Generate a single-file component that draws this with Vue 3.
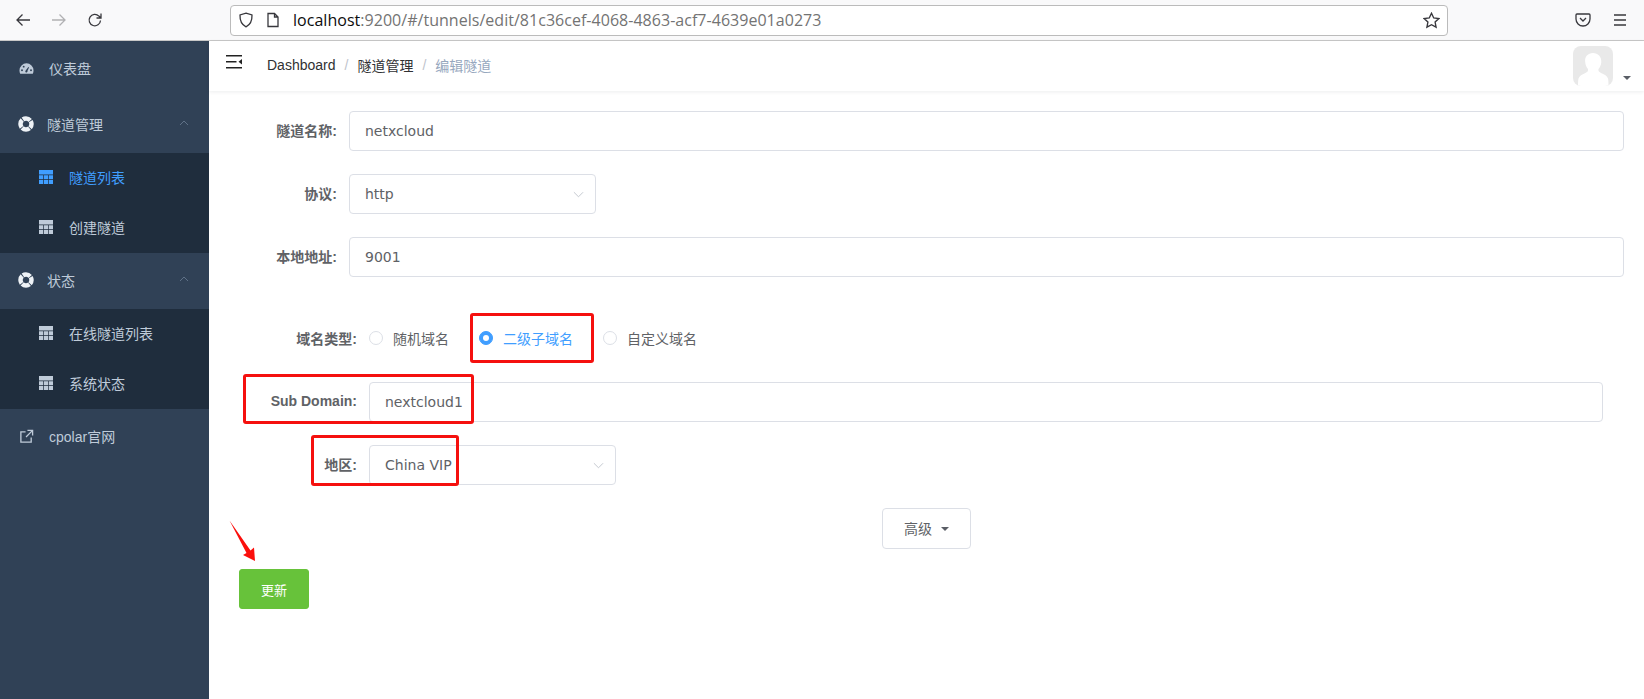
<script setup>
const basicRows = [
  { label: '隧道名称:', value: 'netxcloud', kind: 'input' },
  { label: '协议:', value: 'http', kind: 'select' },
  { label: '本地地址:', value: '9001', kind: 'input' },
]
const radios = [
  { label: '随机域名', on: false },
  { label: '二级子域名', on: true },
  { label: '自定义域名', on: false },
]
</script>

<template>
  <div class="browser">
    <header class="toolbar">
      <svg class="tb-icon back" viewBox="0 0 16 16"><path d="M15 8H2M7.500 2.500 2 8l5.500 5.500" /></svg>
      <svg class="tb-icon fwd" viewBox="0 0 16 16"><path d="M1 8h13M8.500 2.500 14 8l-5.500 5.500" /></svg>
      <svg class="tb-icon reload" viewBox="0 0 16 16"><path d="M13.500 8.500a5.700 5.700 0 1 1-1.600-4.400L14 6M14 1.500V6H9.500" /></svg>
      <div class="urlbar">
        <svg class="tb-icon shield" viewBox="0 0 16 16"><path d="M8 1.200 14 3c.2 5.500-1.500 9.600-6 11.800C3.500 12.600 1.800 8.500 2 3z" /></svg>
        <svg class="tb-icon page" viewBox="0 0 16 16"><path d="M3 1.500h6.500L13 5v9.500H3zM9.500 1.500V5H13" /></svg>
        <div class="url"><b>localhost</b>:9200/#/tunnels/edit/81c36cef-4068-4863-acf7-4639e01a0273</div>
        <svg class="tb-icon star" viewBox="0 0 16 16"><path d="m8 1.200 2.100 4.400 4.800.6-3.500 3.300.9 4.800L8 12l-4.300 2.300.9-4.800L1.100 6.200l4.800-.6z" /></svg>
      </div>
      <svg class="tb-icon pocket" viewBox="0 0 16 16"><path d="M2 2h12a1 1 0 0 1 1 1v4a7 7 0 0 1-14 0V3a1 1 0 0 1 1-1zM5 6l3 3 3-3" /></svg>
      <svg class="tb-icon menu" viewBox="0 0 16 16"><path d="M2 3h12M2 8h12M2 13h12" /></svg>
    </header>

    <div class="app">
      <aside class="sidebar">
        <div class="nav-item">
          <svg class="nav-icon" viewBox="0 0 16 16"><path fill-rule="evenodd" d="M8 2.500a7.500 7.500 0 0 1 7.500 7.500c0 1.300-.3 2.300-.8 3.500H1.300C.8 12.300.5 11.300.5 10A7.500 7.500 0 0 1 8 2.500zM7.100 10.200a1.200 1.200 0 1 0 1.900.4l1.700-3.800-.7-.3zM3.200 8.800a1 1 0 1 0 0 2 1 1 0 0 0 0-2zM5 5a1 1 0 1 0 0 2 1 1 0 0 0 0-2zM12.800 8.800a1 1 0 1 0 0 2 1 1 0 0 0 0-2z" /></svg>
          <span class="dash-text">仪表盘</span>
        </div>

        <div class="nav-item">
          <svg class="nav-icon buoy" viewBox="0 0 16 16"><circle cx="8" cy="8" r="5.500" /></svg>
          <span class="group-text">隧道管理</span>
          <svg class="chev" viewBox="0 0 10 6"><path d="M1 5 5 1l4 4" /></svg>
        </div>
        <div class="submenu">
          <div class="sub-item active">
            <svg class="grid-icon" viewBox="0 0 14 14"><path d="M0 0h14v4.500H0zM0 5.200h4.300v4H0zM5 5.200h4v4H5zM9.700 5.200H14v4H9.700zM0 9.900h4.300V14H0zM5 9.900h4V14H5zM9.700 9.900H14V14H9.700z" /></svg>
            <span>隧道列表</span>
          </div>
          <div class="sub-item">
            <svg class="grid-icon" viewBox="0 0 14 14"><path d="M0 0h14v4.500H0zM0 5.200h4.300v4H0zM5 5.200h4v4H5zM9.700 5.200H14v4H9.700zM0 9.900h4.300V14H0zM5 9.900h4V14H5zM9.700 9.900H14V14H9.700z" /></svg>
            <span>创建隧道</span>
          </div>
        </div>

        <div class="nav-item">
          <svg class="nav-icon buoy" viewBox="0 0 16 16"><circle cx="8" cy="8" r="5.500" /></svg>
          <span class="group-text">状态</span>
          <svg class="chev" viewBox="0 0 10 6"><path d="M1 5 5 1l4 4" /></svg>
        </div>
        <div class="submenu">
          <div class="sub-item">
            <svg class="grid-icon" viewBox="0 0 14 14"><path d="M0 0h14v4.500H0zM0 5.200h4.300v4H0zM5 5.200h4v4H5zM9.700 5.200H14v4H9.700zM0 9.900h4.300V14H0zM5 9.900h4V14H5zM9.700 9.900H14V14H9.700z" /></svg>
            <span>在线隧道列表</span>
          </div>
          <div class="sub-item">
            <svg class="grid-icon" viewBox="0 0 14 14"><path d="M0 0h14v4.500H0zM0 5.200h4.300v4H0zM5 5.200h4v4H5zM9.700 5.200H14v4H9.700zM0 9.900h4.300V14H0zM5 9.900h4V14H5zM9.700 9.900H14V14H9.700z" /></svg>
            <span>系统状态</span>
          </div>
        </div>

        <div class="nav-item">
          <svg class="nav-icon link" viewBox="0 0 16 16"><path d="M7 3H2v11h11V9M9 1.500h5.500V7M14 2 7.500 8.500" /></svg>
          <span class="dash-text">cpolar官网</span>
        </div>
      </aside>

      <main class="main">
        <div class="navbar">
          <svg class="fold" viewBox="0 0 16 14"><path d="M0 0h16v1.600H0zM0 6h10.500v1.600H0zM0 12h16v1.600H0zM16 4v5.600L12.500 6.800z" /></svg>
          <nav class="crumbs">
            <span class="crumb">Dashboard</span><i>/</i>
            <span class="crumb">隧道管理</span><i>/</i>
            <span class="crumb last">编辑隧道</span>
          </nav>
          <div class="avatar-wrap">
            <div class="avatar">
              <svg viewBox="0 0 40 40"><path d="M20 7c5 0 8.500 3.500 8.300 9-.2 3-1.400 5.500-2.800 7-.5 2 .5 3 3 4.200 3 1.300 5.500 2.500 6.500 5.300.4 1.500.5 4 .5 7.500H5c0-3.500.1-6 .5-7.500 1-2.800 3.500-4 6.500-5.300 2.500-1.200 3.500-2.200 3-4.200-1.400-1.500-2.600-4-2.800-7C11.500 10.500 15 7 20 7z" /></svg>
            </div>
            <span class="caret"></span>
          </div>
        </div>

        <form class="form" @submit.prevent>
          <div v-for="row in basicRows" :key="row.label" class="row">
            <label class="label">{{ row.label }}</label>
            <div v-if="row.kind === 'input'" class="input">{{ row.value }}</div>
            <div v-else class="input select">
              {{ row.value }}
              <svg class="sel-arrow" viewBox="0 0 12 7"><path d="M1 1l5 5 5-5" /></svg>
            </div>
          </div>

          <div class="wide-group">
            <div class="row wide radio-row">
              <label class="label">域名类型:</label>
              <div class="radios">
                <span v-for="r in radios" :key="r.label" class="radio" :class="{ on: r.on }">
                  <span class="dot"></span>{{ r.label }}
                </span>
              </div>
            </div>
            <div class="row wide">
              <label class="label latin">Sub Domain:</label>
              <div class="input">nextcloud1</div>
            </div>
            <div class="row wide">
              <label class="label">地区:</label>
              <div class="input select">
                China VIP
                <svg class="sel-arrow" viewBox="0 0 12 7"><path d="M1 1l5 5 5-5" /></svg>
              </div>
            </div>
          </div>

          <div class="adv-row">
            <button type="button" class="adv">高级<span class="adv-caret"></span></button>
          </div>
          <button type="submit" class="save">更新</button>
        </form>
      </main>
    </div>

    <span class="mark mark-radio"></span>
    <span class="mark mark-sub"></span>
    <span class="mark mark-region"></span>
    <svg class="mark-arrow" viewBox="0 0 30 44"><path d="M.5.500 21.500 30.500 25 27.500 26 41 14 35 17.500 33z" /></svg>
  </div>
</template>

<style>
html, body { margin: 0; background: #fff; }
</style>

<style scoped>
.browser { position: relative; width: 1644px; height: 699px; overflow: hidden; font-family: "Liberation Sans", "Noto Sans CJK SC", sans-serif; font-size: 14px; background: #fff; }

.toolbar { height: 40px; background: #f9f9fa; border-bottom: 1px solid #c8c8c8; display: flex; align-items: center; position: relative; }
.tb-icon { width: 16px; height: 16px; fill: none; stroke: #38383d; stroke-width: 1.300; flex: none; }
.back { margin-left: 15px; }
.fwd { margin-left: 20px; stroke: #b1b1b3; }
.reload { margin-left: 20px; }
.urlbar { margin-left: 127px; width: 1218px; height: 31px; box-sizing: border-box; background: #fff; border: 1px solid #bbb; border-radius: 4px; display: flex; align-items: center; }
.shield { margin-left: 7px; }
.page { margin-left: 11px; }
.url { margin-left: 12px; flex: 1; font-family: "Open Sans", sans-serif; font-size: 16px; letter-spacing: 0.03px; color: #737373; white-space: nowrap; }
.url b { font-weight: 400; color: #0c0c0d; }
.star { width: 17px; height: 17px; margin-right: 7px; }
.pocket { margin-left: 127px; }
.menu { margin-left: 21px; }

.app { display: flex; height: 658px; }

.sidebar { width: 209px; flex: none; background: #304156; color: #bfcbd9; }
.nav-item { height: 56px; box-sizing: border-box; padding: 0 0 2px 19px; display: flex; align-items: center; position: relative; }
.nav-icon { width: 15px; height: 15px; fill: #bfcbd9; flex: none; }
.buoy { width: 16px; height: 16px; margin-left: -1px; fill: #304156; stroke: #eef2f6; stroke-width: 4.500; stroke-dasharray: 7.840 0.800; stroke-dashoffset: 3.920; }
.link { fill: none; stroke: #bfcbd9; stroke-width: 1.400; }
.dash-text { margin-left: 15px; }
.group-text { margin-left: 13px; }
.chev { position: absolute; right: 20px; top: 23px; width: 10px; height: 6px; fill: none; stroke: #5f7187; stroke-width: 1; }
.submenu { background: #1f2d3d; }
.sub-item { height: 50px; box-sizing: border-box; padding: 0 0 2px 39px; display: flex; align-items: center; }
.sub-item.active { color: #409eff; }
.grid-icon { width: 14px; height: 14px; fill: currentColor; margin-right: 16px; flex: none; }

.main { flex: 1; min-width: 0; }
.navbar { height: 50px; box-sizing: border-box; display: flex; align-items: center; box-shadow: 0 1px 4px rgba(0, 21, 41, 0.08); position: relative; }
.fold { width: 16px; height: 14px; fill: #222; margin-left: 17px; margin-top: -9px; flex: none; }
.crumbs { margin-left: 25px; display: flex; align-items: center; color: #303133; margin-top: -2px; }
.crumbs i { font-style: normal; color: #c0c4cc; margin: 0 9px; }
.crumb.last { color: #97a8be; }
.avatar-wrap { margin-left: auto; margin-right: 13px; display: flex; align-items: flex-end; gap: 10px; }
.avatar { width: 40px; height: 40px; background: #e9e9e9; border-radius: 8px; overflow: hidden; }
.avatar svg { display: block; width: 40px; height: 40px; fill: #fff; }
.caret { border: 4px solid transparent; border-top-color: #5a5e66; border-bottom: 0; margin-bottom: 6px; }

.form { padding: 20px 20px 0 0; }
.row { display: flex; align-items: center; height: 40px; margin-bottom: 23px; }
.label { width: 140px; box-sizing: border-box; padding: 0 12px 2px 0; text-align: right; font-weight: 700; color: #606266; flex: none; }
.input { flex: 1; height: 40px; box-sizing: border-box; border: 1px solid #dcdfe6; border-radius: 4px; padding: 0 15px; line-height: 38px; color: #606266; font-family: "DejaVu Sans", "Noto Sans CJK SC", sans-serif; }
.select { flex: none; width: 247px; position: relative; }
.sel-arrow { position: absolute; right: 11px; top: 16px; width: 11px; height: 7px; fill: none; stroke: #c0c4cc; stroke-width: 1; }

.wide-group { margin-top: 42px; padding-right: 21px; }
.wide .label { width: 160px; }
.radios { display: flex; color: #606266; padding-bottom: 2px; }
.radio { display: flex; align-items: center; margin-right: 30px; }
.dot { width: 14px; height: 14px; box-sizing: border-box; border: 1px solid #dcdfe6; border-radius: 50%; margin-right: 10px; }
.radio.on { color: #409eff; }
.radio.on .dot { background: #409eff; border-color: #409eff; position: relative; }
.radio.on .dot::after { content: ""; position: absolute; left: 3px; top: 3px; width: 6px; height: 6px; border-radius: 50%; background: #fff; }

.adv-row { display: flex; justify-content: center; height: 41px; margin-right: -20px; }
.adv { width: 89px; height: 41px; background: #fff; border: 1px solid #dcdfe6; border-radius: 4px; color: #606266; font: inherit; padding: 0 0 2px; display: inline-flex; align-items: center; justify-content: center; }
.adv-caret { border: 4.500px solid transparent; border-top-color: #5a5e66; border-bottom: 0; margin: 2px 0 0 9px; }
.save { display: block; margin: 20px 0 0 30px; width: 70px; height: 40px; background: #67c23a; border: 1px solid #67c23a; border-radius: 3px; color: #fff; font: inherit; font-size: 13px; }

.mark { position: absolute; box-sizing: border-box; border: 3px solid #f5100e; border-radius: 3px; }
.mark-radio { left: 470px; top: 313px; width: 124px; height: 50px; }
.mark-sub { left: 243px; top: 374px; width: 231px; height: 50px; }
.mark-region { left: 311px; top: 435px; width: 148px; height: 51px; }
.mark-arrow { position: absolute; left: 229px; top: 520px; width: 30px; height: 44px; fill: #fb0f0c; }
</style>
